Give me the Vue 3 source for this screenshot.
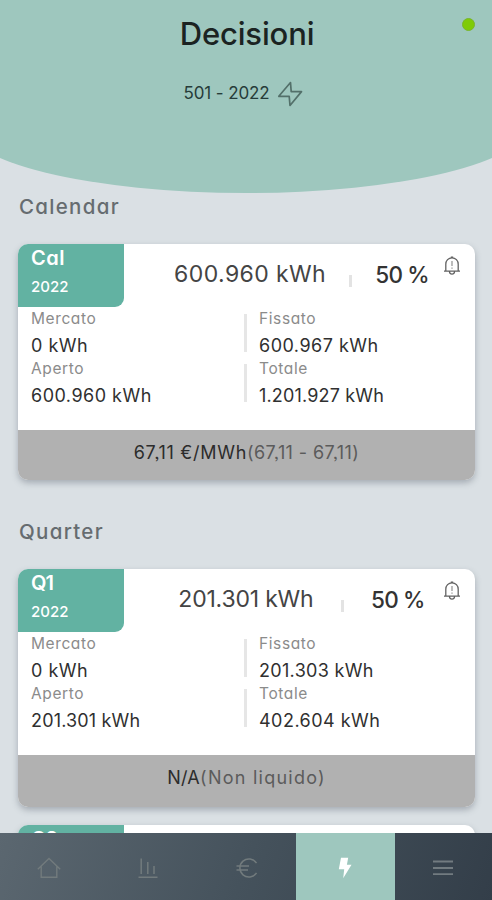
<script setup>
const sections = [
  {
    heading: 'Calendar',
    cards: [
      {
        name: 'Cal', year: '2022', volume: '600.960 kWh', percent: '50 %',
        market: '0 kWh', fixed: '600.967 kWh', open: '600.960 kWh', total: '1.201.927 kWh',
        price: '67,11 €/MWh', range: '(67,11 - 67,11)', kind: 'priced'
      }
    ]
  },
  {
    heading: 'Quarter',
    cards: [
      {
        name: 'Q1', year: '2022', volume: '201.301 kWh', percent: '50 %',
        market: '0 kWh', fixed: '201.303 kWh', open: '201.301 kWh', total: '402.604 kWh',
        price: 'N/A', range: '(Non liquido)', kind: 'illiquid'
      },
      { name: 'Q2', kind: 'illiquid' }
    ]
  }
]

// Figures with narrow ones are set a little tighter.
const tracking = (text) => ({ letterSpacing: `${0.48 - 0.16 * (text.split('1').length - 1)}px` })
</script>

<template>
  <div class="screen">
    <header class="hero">
      <div class="curve"></div>
      <h1>Decisioni</h1>
      <div class="contract">
        <span>501 - 2022</span>
        <svg width="26" height="26" viewBox="0 0 26 26" fill="none" stroke="#53706a" stroke-width="1.7" stroke-linejoin="round">
          <path d="M13.5 1.5 1.8 15.3H12.2L13 24.5 24.5 10.6H14.2Z" />
        </svg>
      </div>
      <i class="status"></i>
    </header>

    <main>
      <section v-for="s in sections" :key="s.heading">
        <h2>{{ s.heading }}</h2>
        <article v-for="c in s.cards" :key="c.name" class="card" :class="c.kind">
          <div class="top">
            <div class="tag"><b>{{ c.name }}</b><small v-if="c.year">{{ c.year }}</small></div>
            <template v-if="c.volume">
              <div class="summary">
                <span class="volume">{{ c.volume }}</span>
                <i></i>
                <strong>{{ c.percent }}</strong>
              </div>
              <svg class="bell" width="18" height="20" viewBox="0 0 18 20" fill="none" stroke="#626262" stroke-width="1.3">
                <path d="M1 15.2H17M2.8 15V8.2C2.8 4.6 5.4 1.8 9 1.8s6.2 2.8 6.2 6.4V15M6.4 15.5c.2 1.7 1.2 2.6 2.6 2.6s2.4-.9 2.6-2.6M7.8 1.2h2.4" />
                <path d="M9 5v5M9 11.5v1.2" stroke="#999" />
              </svg>
            </template>
          </div>
          <template v-if="c.volume">
            <div class="grid">
              <div class="cell"><label>Mercato</label><span :style="tracking(c.market)">{{ c.market }}</span></div>
              <div class="cell ruled"><label>Fissato</label><span :style="tracking(c.fixed)">{{ c.fixed }}</span></div>
              <div class="cell"><label>Aperto</label><span :style="tracking(c.open)">{{ c.open }}</span></div>
              <div class="cell ruled"><label>Totale</label><span :style="tracking(c.total)">{{ c.total }}</span></div>
            </div>
            <footer><b>{{ c.price }}</b><span>{{ c.range }}</span></footer>
          </template>
        </article>
      </section>
    </main>

    <nav>
      <a>
        <svg width="24" height="22" viewBox="0 0 24 22" fill="none" stroke="#727b7d" stroke-width="1.4">
          <path d="M.8 12.2 12 1.5 23.2 12.2M4.2 9.4V20.3H19.8V9.4" />
        </svg>
      </a>
      <a>
        <svg width="20" height="22" viewBox="0 0 20 22" fill="none" stroke="#727b7d" stroke-width="1.5">
          <path d="M3.2 1.5V17M9.8 5V17M16 9V17M.5 20.3H19.5" />
        </svg>
      </a>
      <a>
        <svg width="22" height="22" viewBox="0 0 22 22" fill="none" stroke="#727b7d" stroke-width="1.5">
          <path d="M20.5 6.2A9 9 0 1 0 20.5 15.8M.5 9H13M.5 13H12" />
        </svg>
      </a>
      <a class="active">
        <svg width="14" height="22" viewBox="0 0 14 22" fill="#fff">
          <path d="M3 .7H10.2L8.9 7.8H13.5L5.2 21.3 6.2 12.2H.8Z" />
        </svg>
      </a>
      <a>
        <svg width="20" height="18" viewBox="0 0 20 18" fill="none" stroke="#727b80" stroke-width="1.8">
          <path d="M0 2.5H20M0 9H20M0 15.2H20" />
        </svg>
      </a>
    </nav>
  </div>
</template>

<style>
body { margin: 0; overflow: hidden; }
</style>

<style scoped>
* { box-sizing: border-box; }
.screen {
  width: 492px; height: 900px; overflow: hidden; position: relative;
  display: flex; flex-direction: column;
  background: #dae0e4;
  font-family: Inter, "Noto Sans", sans-serif;
  font-feature-settings: "cv11", "ss03";
  color: #333;
}
span, b, strong, small, label { white-space: nowrap; }
.hero {
  height: 193px; flex: none; position: relative;
  display: flex; flex-direction: column; align-items: center;
  overflow: hidden;
}
.curve {
  position: absolute; left: 50%; bottom: 0; width: 566px; height: 260px;
  transform: translateX(-50%);
  background: #9ec7be; border-radius: 0 0 283px 283px / 0 0 69px 69px;
}
h1 {
  position: relative; margin: 14px 0 0; padding-left: 2px;
  font-size: 31px; line-height: 40px; font-weight: 500; letter-spacing: -0.15px; color: #1b2322;
}
.contract {
  position: relative; display: flex; align-items: center; gap: 7px;
  height: 26px; margin: 26px 0 0 -6px;
  font-size: 17px; color: #263c39;
}
.contract span { letter-spacing: -0.1px; }
.contract svg { margin-top: 2px; }
.status {
  position: absolute; left: 462px; top: 18px; width: 13px; height: 13px;
  border-radius: 50%; background: #7fcb07; border: 1px solid #79b62b;
}
main { flex: 1; min-height: 0; overflow: hidden; padding: 0 17px 0 18px; }
h2 {
  margin: 0; height: 51px; padding-left: 1px;
  font-size: 20.5px; line-height: 27px; font-weight: 500; letter-spacing: 1.3px; color: #666c70;
}
section + section h2 { margin-top: 38px; }
.card {
  height: 236px; border-radius: 10px; overflow: hidden; background: #fff;
  box-shadow: 0 3px 6px rgba(70, 78, 92, .35);
  display: flex; flex-direction: column;
}
.card.illiquid { height: 238px; }
.card + .card { margin-top: 18px; }
.top { display: flex; height: 63px; flex: none; }
.tag {
  width: 106px; padding: 2px 0 0 13px; background: #62b2a2; color: #fff;
  border-radius: 0 0 9px 0; display: flex; flex-direction: column;
}
.tag b { font-size: 20px; line-height: 25px; font-weight: 600; letter-spacing: .5px; }
.illiquid .tag b { letter-spacing: -1px; }
.tag small { font-size: 15px; line-height: 20px; margin-top: 6px; font-weight: 500; }
.summary {
  width: 301px; margin-left: 27px; height: 60px;
  display: flex; align-items: center; justify-content: space-evenly;
}
.summary i { width: 3px; height: 12px; background: #e3e3e3; margin-top: 14px; }
.volume { font-size: 23px; letter-spacing: .4px; font-weight: 400; color: #444; }
.illiquid .volume { letter-spacing: -.2px; }
.summary strong { font-size: 22.5px; font-weight: 500; letter-spacing: -.8px; color: #333; }
.bell { margin: 12px 0 0 -9px; flex: none; }
.grid { display: grid; grid-template-columns: 226px 1fr; grid-auto-rows: 50px; height: 123px; flex: none; }
.cell { display: flex; flex-direction: column; padding: 1px 0 0 13px; }
.cell.ruled { position: relative; padding-left: 15px; }
.cell.ruled::before { content: ""; position: absolute; left: 0; top: 7px; width: 3px; height: 38px; background: #e6e6e6; }
.cell label { font-size: 15.5px; line-height: 22px; letter-spacing: .6px; color: #8b8b8b; }
.cell span { font-size: 18px; line-height: 26px; margin-top: 3px; color: #303030; }
footer {
  flex: 1; display: flex; justify-content: center; padding-top: 9px;
  background: #b1b1b1; font-size: 18px; line-height: 28px; color: #5b5b5b;
}
footer b { font-weight: 400; letter-spacing: .7px; color: #2c2c2c; }
footer span { letter-spacing: .4px; }
.illiquid footer b { letter-spacing: .3px; }
.illiquid footer span { letter-spacing: 1.25px; }
nav {
  height: 67px; flex: none; position: relative; display: grid;
  grid-template-columns: repeat(4, 98.7px) 1fr;
  background: linear-gradient(110deg, #5b6770, #45525c 50%, #333e49);
}
nav a { display: flex; align-items: center; justify-content: center; padding-top: 2px; }
nav a.active { background: #9ec7be; }
</style>
